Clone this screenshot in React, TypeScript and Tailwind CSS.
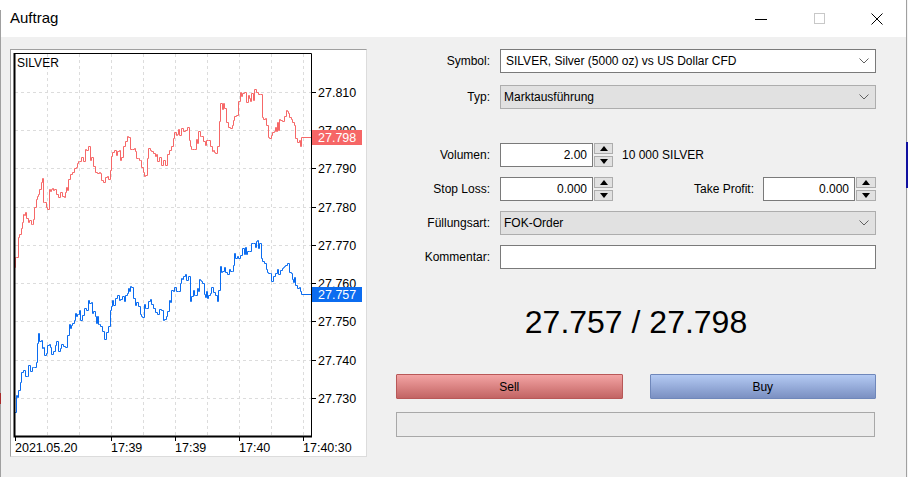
import React from 'react';

type Pt = [number, number];

// rough shape of the ask / bid ticks, in pixel space of the chart
const ASK: Pt[] = [[14,265],[17,250],[20,227],[23,215],[28,220],[33,218],[35,203],[37,197],[40,183],[42,183],[43,206],[47,206],[48,192],[52,190],[55,188],[58,192],[62,198],[65,190],[70,177],[73,170],[77,165],[80,165],[84,155],[88,148],[92,165],[96,170],[100,172],[104,183],[108,175],[112,157],[116,152],[120,155],[125,145],[128,137],[132,150],[136,155],[140,165],[145,177],[148,150],[152,157],[160,157],[164,167],[168,150],[172,140],[176,135],[180,130],[183,126],[188,130],[190,148],[195,148],[199,130],[202,138],[205,147],[208,137],[212,150],[215,156],[218,145],[220,107],[224,108],[227,128],[230,130],[233,115],[236,112],[240,97],[245,95],[248,100],[252,97],[255,90],[259,88],[262,115],[265,120],[268,135],[272,137],[276,130],[280,120],[287,110],[290,120],[294,130],[297,140],[300,145],[302,138]];

const BID: Pt[] = [[14,409],[17,395],[20,380],[22,373],[27,372],[30,368],[35,366],[36,360],[37,338],[40,335],[42,345],[45,355],[48,340],[52,352],[55,341],[58,353],[61,340],[64,355],[67,337],[70,325],[73,320],[77,315],[80,316],[84,310],[89,299],[93,315],[97,320],[100,325],[105,340],[108,325],[112,305],[116,300],[120,300],[125,295],[130,288],[134,305],[138,310],[140,317],[145,305],[148,298],[152,310],[156,310],[160,313],[164,315],[168,310],[172,290],[176,290],[180,285],[183,276],[188,280],[190,297],[195,292],[199,283],[203,290],[207,293],[210,290],[215,298],[218,295],[220,265],[224,272],[228,268],[232,275],[234,258],[238,256],[242,250],[245,250],[248,255],[252,245],[256,244],[259,242],[262,258],[265,270],[268,272],[272,278],[276,272],[280,266],[287,260],[290,270],[294,280],[297,283],[301,292]];

function stepPath(keys: Pt[], seed: number, endY: number) {
  let s = seed;
  const rnd = () => {
    s = (s * 16807) % 2147483647;
    return s / 2147483647;
  };
  const at = (x: number) => {
    for (let i = 1; i < keys.length; i++) {
      const [x0, y0] = keys[i - 1];
      const [x1, y1] = keys[i];
      if (x <= x1) return y0 + ((y1 - y0) * (x - x0)) / (x1 - x0);
    }
    return keys[keys.length - 1][1];
  };
  let d = `M14.5 ${keys[0][1] + 0.5}`;
  let x = 14;
  while (x < 301) {
    const y = Math.round(at(x) + (rnd() - 0.5) * 11) + 0.5;
    const nx = Math.min(301, x + 1 + Math.floor(rnd() * 2));
    d += ` V${y} H${nx + 0.5}`;
    x = nx;
  }
  d += ` V${endY + 0.5} H311`;
  return d;
}

const yLevels = [
  { y: 92, t: '27.810' },
  { y: 130, t: '27.800' },
  { y: 168, t: '27.790' },
  { y: 207, t: '27.780' },
  { y: 245, t: '27.770' },
  { y: 283, t: '27.760' },
  { y: 321, t: '27.750' },
  { y: 360, t: '27.740' },
  { y: 398, t: '27.730' },
];
const xGrid = [47, 79, 111, 143, 175, 207, 239, 271, 303];
const xLabels = [
  { x: 15, t: '2021.05.20' },
  { x: 111, t: '17:39' },
  { x: 175, t: '17:39' },
  { x: 239, t: '17:40' },
  { x: 303, t: '17:40:30' },
];

const font = "'Liberation Sans', Arial, sans-serif";

const Chart = () => {
  const ask = stepPath(ASK, 982451, 137);
  const bid = stepPath(BID, 613577, 294);
  return (
    <svg width={355} height={406} viewBox="11 50 355 406" className="block">
      <rect x={11} y={50} width={355} height={406} fill="#fff" />
      {yLevels.map((l) => (
        <line key={l.y} x1={15} x2={311} y1={l.y + 0.5} y2={l.y + 0.5} stroke="#dcdcdc" strokeDasharray="3 3" />
      ))}
      {xGrid.map((x) => (
        <line key={x} x1={x + 0.5} x2={x + 0.5} y1={54} y2={436} stroke="#dcdcdc" strokeDasharray="3 3" />
      ))}
      <path d={ask} fill="none" stroke="#f66868" strokeWidth={1} />
      <path d={bid} fill="none" stroke="#0b6cf0" strokeWidth={1} />
      {/* plot frame */}
      <path d="M14 53.5 H311.5 V436" fill="none" stroke="#000" strokeWidth={1} />
      <path d="M14.5 53 V436.5 H312" fill="none" stroke="#000" strokeWidth={2} />
      <text x={17} y={67} fontSize={12} fontFamily={font} fill="#000">SILVER</text>
      {yLevels.map((l) => (
        <g key={l.t}>
          <line x1={311} x2={316} y1={l.y + 0.5} y2={l.y + 0.5} stroke="#000" />
          <text x={318} y={l.y + 5} fontSize={12.5} fontFamily={font} fill="#000">{l.t}</text>
        </g>
      ))}
      {xLabels.map((l, i) => (
        <g key={i}>
          <line x1={l.x + 0.5} x2={l.x + 0.5} y1={436} y2={441} stroke="#000" />
          <text x={l.x} y={452} fontSize={12.5} fontFamily={font} fill="#000">{l.t}</text>
        </g>
      ))}
      {/* last price tags */}
      <rect x={312} y={130} width={50} height={15} fill="#f66666" />
      <text x={318} y={142} fontSize={12.5} fontFamily={font} fill="#fff">27.798</text>
      <rect x={312} y={287} width={50} height={15} fill="#0b6cf0" />
      <text x={318} y={299} fontSize={12.5} fontFamily={font} fill="#fff">27.757</text>
    </svg>
  );
};

const Chevron = () => (
  <svg width="10" height="6" viewBox="0 0 10 6" className="shrink-0">
    <polyline points="0.5,0.5 5,5 9.5,0.5" fill="none" stroke="#606060" strokeWidth="1" />
  </svg>
);

const Spinner = ({ w }: { w: string }) => (
  <div className={`flex flex-col gap-[2px] h-[24px] ${w}`}>
    <button className="flex-1 flex items-center justify-center bg-[#e1e1e1] border border-[#adadad]">
      <svg width="8" height="5" viewBox="0 0 8 5"><polygon points="0,5 4,0 8,5" fill="#000" /></svg>
    </button>
    <button className="flex-1 flex items-center justify-center bg-[#e1e1e1] border border-[#adadad]">
      <svg width="8" height="5" viewBox="0 0 8 5"><polygon points="0,0 8,0 4,5" fill="#000" /></svg>
    </button>
  </div>
);

const Label = ({ children }: { children: React.ReactNode }) => (
  <div className="h-[24px] flex items-center justify-end">{children}</div>
);

const NumField = ({ value, w }: { value: string; w: string }) => (
  <div className={`h-[24px] ${w} bg-white border border-[#7a7a7a] flex items-center justify-end pr-[5px]`}>{value}</div>
);

const App = () => {
  return (
    <div className="w-[908px] h-[477px] flex overflow-hidden bg-white text-[12px] text-black font-['Liberation_Sans',Arial,sans-serif]">
      {/* edge of the window behind */}
      <div className="w-[1px] flex flex-col">
        <div className="h-[10px] bg-white" />
        <div className="h-[383px] bg-[#a0a0a0]" />
        <div className="h-[11px] bg-[#a82a2a]" />
        <div className="flex-1 bg-[#a0a0a0]" />
      </div>

      <div className="flex-1 flex flex-col">
        <header className="h-[37px] flex items-center bg-white">
          <span className="pl-[9px] text-[15px] text-black">Auftrag</span>
          <div className="ml-auto flex h-full">
            <button className="w-[58px] h-full flex items-center justify-center">
              <svg width="12" height="12" viewBox="0 0 12 12"><line x1="0" x2="12" y1="6.5" y2="6.5" stroke="#000" /></svg>
            </button>
            <button className="w-[58px] h-full flex items-center justify-center">
              <svg width="11" height="11" viewBox="0 0 11 11"><rect x="0.5" y="0.5" width="10" height="10" fill="none" stroke="#c8c8c8" /></svg>
            </button>
            <button className="w-[58px] h-full flex items-center justify-center">
              <svg width="12" height="12" viewBox="0 0 12 12">
                <line x1="0.5" y1="0.5" x2="11.5" y2="11.5" stroke="#000" />
                <line x1="11.5" y1="0.5" x2="0.5" y2="11.5" stroke="#000" />
              </svg>
            </button>
          </div>
        </header>

        <div className="flex-1 flex bg-[#f0f0f0] pt-[12px] pl-[9px]">
          <div className="w-[357px] h-[408px] border border-t-[#a0a0a0] border-l-[#a0a0a0] border-r-[#dcdcdc] border-b-[#dcdcdc]">
            <Chart />
          </div>

          <div className="ml-[29px] w-[480px] grid grid-cols-[94px_1fr] gap-x-[10px] content-start">
            <Label>Symbol:</Label>
            <div className="h-[24px] bg-white border border-[#7a7a7a] flex items-center pl-[5px] pr-[6px]">
              <span className="flex-1">SILVER, Silver (5000 oz) vs US Dollar CFD</span>
              <Chevron />
            </div>

            <div className="mt-[12px]"><Label>Typ:</Label></div>
            <div className="mt-[12px] h-[24px] bg-[#e1e1e1] border border-[#adadad] flex items-center pl-[3px] pr-[6px]">
              <span className="flex-1">Marktausführung</span>
              <Chevron />
            </div>

            <div className="mt-[34px]"><Label>Volumen:</Label></div>
            <div className="mt-[34px] flex items-center">
              <NumField value="2.00" w="w-[93px]" />
              <div className="ml-[1px]"><Spinner w="w-[19px]" /></div>
              <span className="ml-[9px]">10 000 SILVER</span>
            </div>

            <div className="mt-[10px]"><Label>Stop Loss:</Label></div>
            <div className="mt-[10px] flex items-center">
              <NumField value="0.000" w="w-[93px]" />
              <div className="ml-[1px]"><Spinner w="w-[19px]" /></div>
              <span className="flex-1 text-right">Take Profit:</span>
              <div className="ml-[9px]"><NumField value="0.000" w="w-[92px]" /></div>
              <div className="ml-[1px]"><Spinner w="w-[20px]" /></div>
            </div>

            <div className="mt-[10px]"><Label>Füllungsart:</Label></div>
            <div className="mt-[10px] h-[24px] bg-[#e1e1e1] border border-[#adadad] flex items-center pl-[3px] pr-[6px]">
              <span className="flex-1">FOK-Order</span>
              <Chevron />
            </div>

            <div className="mt-[10px]"><Label>Kommentar:</Label></div>
            <div className="mt-[10px] h-[24px] bg-white border border-[#7a7a7a]" />

            <div className="col-span-2 mt-[35px] text-center text-[32px] leading-[36px]">27.757 / 27.798</div>

            <div className="col-span-2 mt-[34px] grid grid-cols-2 gap-[27px]">
              <button className="h-[25px] rounded-[1px] border border-[#b85858] bg-gradient-to-b from-[#f3a4a4] to-[#c26464] text-[12px] text-black">Sell</button>
              <button className="h-[25px] rounded-[1px] border border-[#6f87ba] bg-gradient-to-b from-[#b4caf3] to-[#7b90c2] text-[12px] text-black">Buy</button>
            </div>

            <div className="col-span-2 mt-[13px] h-[25px] w-[479px] border border-[#a8a8a8] bg-[#ececec]" />
          </div>
        </div>
      </div>

      {/* right edge, with a sliver of the window behind */}
      <div className="w-[2px] flex flex-col border-l border-[#a0a0a0] bg-[#f4f4f4]">
        <div className="h-[142px]" />
        <div className="h-[46px] bg-[#1010a0] -ml-[1px] w-[2px]" />
      </div>
    </div>
  );
};

export default App;
